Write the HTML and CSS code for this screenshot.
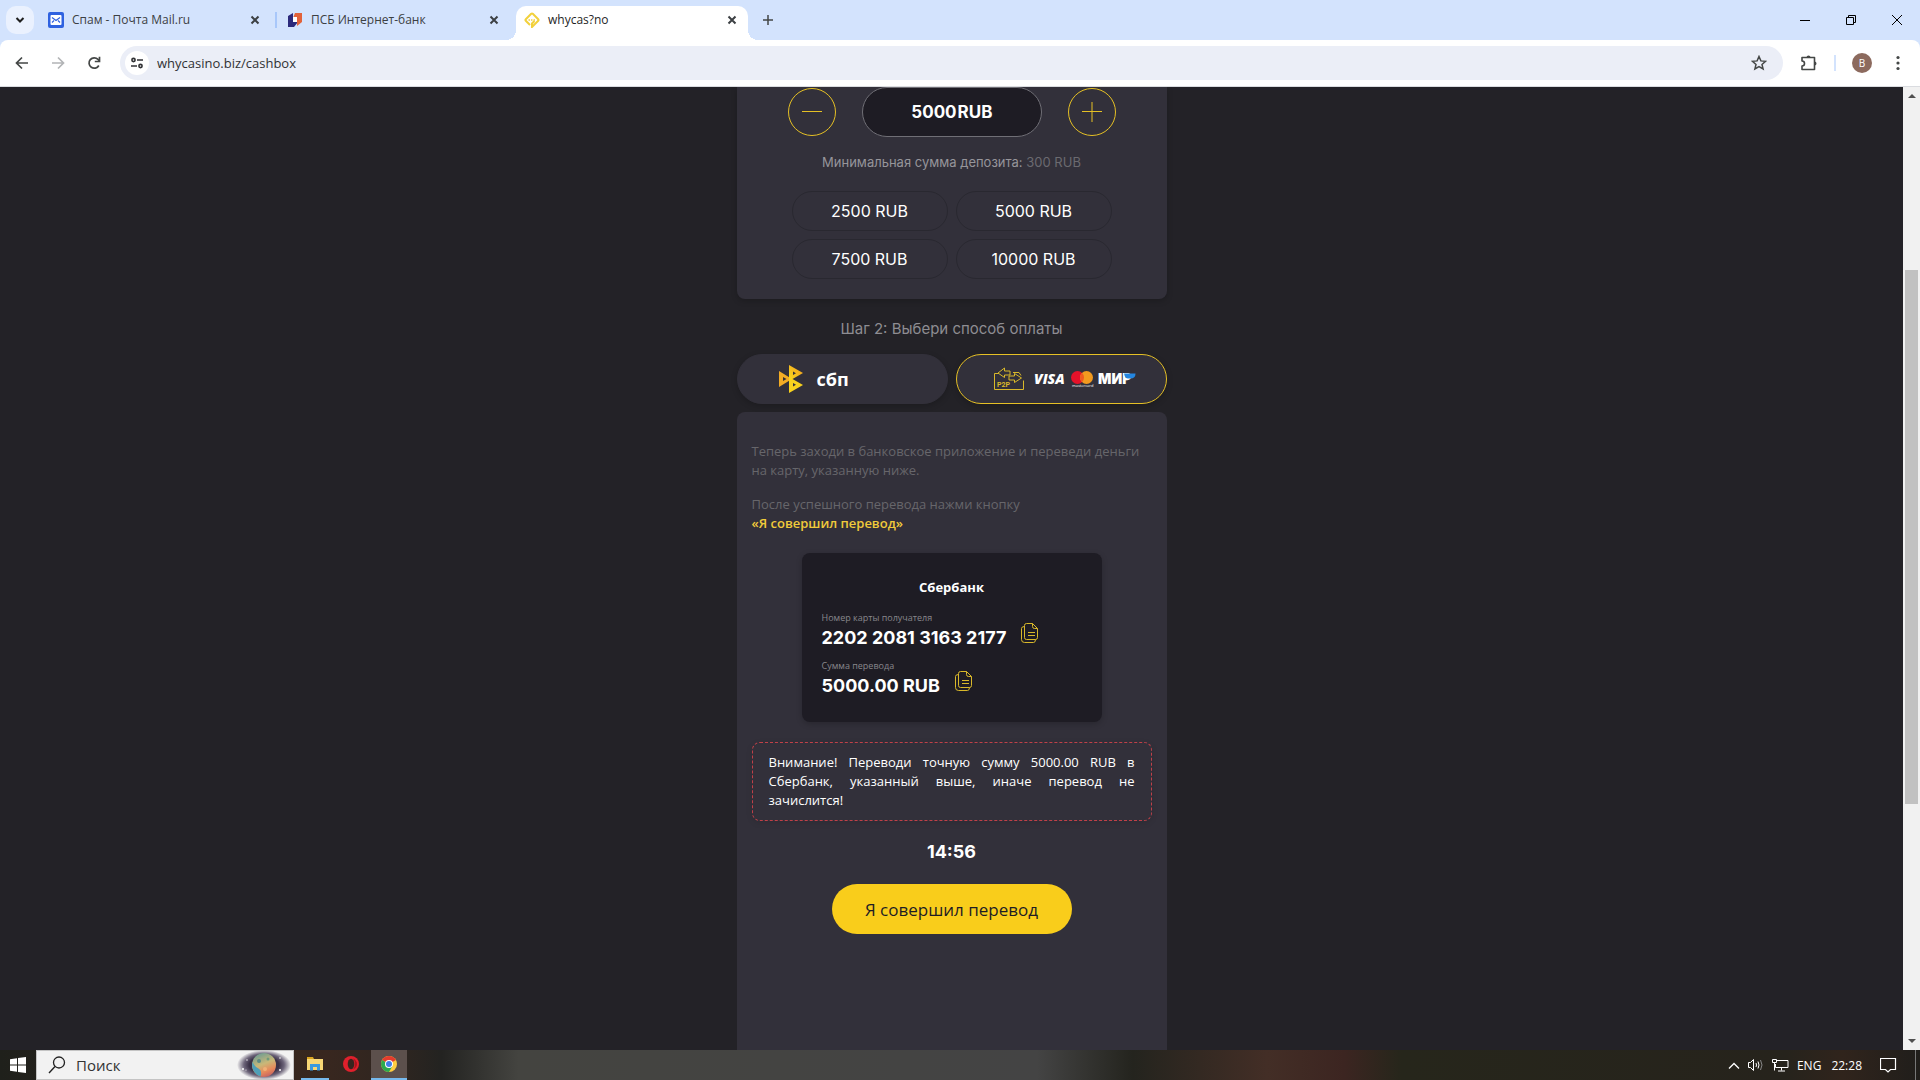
FILE: index.html
```html
<!DOCTYPE html>
<html lang="ru">
<head>
  <meta charset="UTF-8" />
  <meta name="viewport" content="width=device-width, initial-scale=1.0" />
  <title>whycas?no</title>
  <link rel="stylesheet" href="styles.css">
</head>
<body>
  <header class="browser">
    <div class="tab-strip">
      <button class="tab-search" aria-label="Поиск вкладок">
        <svg width="10" height="8" viewBox="0 0 10 8"><path d="M1.5 2l3.5 3.5L8.5 2" fill="none" stroke="#1f1f1f" stroke-width="2"/></svg>
      </button>
      <div class="tab">
        <svg width="16" height="16" viewBox="0 0 16 16">
          <rect width="16" height="16" rx="2" fill="#2f62e0"/>
          <rect x="2.500" y="3" width="11" height="10" rx="1" fill="#fff"/>
          <path d="M4 5.500l4 3 4-3M4 10.500l2-2M12 10.500l-2-2" fill="none" stroke="#2f62e0" stroke-width="1.200"/>
        </svg>
        <span class="tab-title">Спам - Почта Mail.ru</span>
        <button class="tab-close" aria-label="Закрыть"><svg width="10" height="10" viewBox="0 0 10 10"><path d="M1.500 1.500l7 7M8.500 1.500l-7 7"/></svg></button>
      </div>
      <span class="tab-divider"></span>
      <div class="tab">
        <svg width="16" height="16" viewBox="0 0 16 16">
          <path d="M1 4l5-3v9h5l-4 5H1z" fill="#2c2a7c"/>
          <path d="M8 1h7v9l-5 4V6H6z" fill="#e2623a"/>
          <path d="M6 5h4v5H6z" fill="#fff"/>
        </svg>
        <span class="tab-title">ПСБ Интернет-банк</span>
        <button class="tab-close" aria-label="Закрыть"><svg width="10" height="10" viewBox="0 0 10 10"><path d="M1.500 1.500l7 7M8.500 1.500l-7 7"/></svg></button>
      </div>
      <div class="tab active">
        <svg width="16" height="16" viewBox="0 0 16 16">
          <path d="M6 13L1.800 8.800a1.200 1.200 0 0 1 0-1.600L7.200 1.800a1.200 1.200 0 0 1 1.600 0L14.200 7.200a1.200 1.200 0 0 1 0 1.600L8 15v-3.500l2.500-2.500" fill="none" stroke="#f2d13c" stroke-width="2"/>
          <path d="M4.500 8h7" stroke="#f2d13c" stroke-width="1.500" stroke-dasharray="1.500 1"/>
        </svg>
        <span class="tab-title">whycas?no</span>
        <button class="tab-close" aria-label="Закрыть"><svg width="10" height="10" viewBox="0 0 10 10"><path d="M1.500 1.500l7 7M8.500 1.500l-7 7"/></svg></button>
      </div>
      <button class="new-tab" aria-label="Новая вкладка">
        <svg width="12" height="12" viewBox="0 0 12 12"><path d="M6 1v10M1 6h10" stroke="#444746" stroke-width="1.500"/></svg>
      </button>
      <div class="window-controls">
        <button aria-label="Свернуть"><svg width="10" height="10" viewBox="0 0 10 10"><path d="M0 5.500h10"/></svg></button>
        <button aria-label="Развернуть"><svg width="10" height="10" viewBox="0 0 10 10"><path d="M.5 2.500h7v7h-7zM2.500 2.500v-2h7v7h-2"/></svg></button>
        <button aria-label="Закрыть окно"><svg width="10" height="10" viewBox="0 0 10 10"><path d="M0 0l10 10M10 0L0 10"/></svg></button>
      </div>
    </div>
    <div class="toolbar">
      <nav class="nav-buttons">
        <button aria-label="Назад"><svg width="14" height="14" viewBox="0 0 14 14"><path d="M13 7H2M7 1.500L1.500 7 7 12.500" fill="none" stroke="#444746" stroke-width="1.700"/></svg></button>
        <button aria-label="Вперёд"><svg width="14" height="14" viewBox="0 0 14 14"><path d="M1 7h11M7 1.500L12.500 7 7 12.500" fill="none" stroke="#b2b4b6" stroke-width="1.700"/></svg></button>
        <button aria-label="Обновить"><svg width="14" height="14" viewBox="0 0 14 14"><path d="M11.800 9.500A5.200 5.200 0 1 1 11 3.400l1.200 1.400" fill="none" stroke="#444746" stroke-width="1.700"/><path d="M12.500.8v4.700H7.800" fill="none" stroke="#444746" stroke-width="1.700"/></svg></button>
      </nav>
      <div class="omnibox">
        <button class="site-info" aria-label="Сведения о сайте">
          <svg width="12" height="12" viewBox="0 0 12 12" fill="none" stroke="#303134" stroke-width="1.600"><circle cx="2.500" cy="3" r="1.600"/><path d="M6 3h6M0 9h6"/><circle cx="9.500" cy="9" r="1.600"/></svg>
        </button>
        <input class="url" type="text" value="whycasino.biz/cashbox" aria-label="Адресная строка">
        <button class="star" aria-label="Добавить в закладки">
          <svg width="16" height="16" viewBox="0 0 16 16"><path d="M8 1.500l1.900 4.400 4.700.4-3.600 3.100 1.100 4.600L8 11.600 3.900 14 5 9.400 1.400 6.300l4.700-.4z" fill="none" stroke="#444746" stroke-width="1.500"/></svg>
        </button>
      </div>
      <div class="toolbar-right">
        <button aria-label="Расширения">
          <svg width="18" height="18" viewBox="0 0 18 18"><path d="M2 3.500h12.500v12H2V12a2.200 2.200 0 0 0 0-5z" fill="none" stroke="#444746" stroke-width="1.600" stroke-linejoin="round"/><path d="M6.500 3.500a2 2 0 0 1 4 0zM14.500 7.500a2 2 0 0 1 0 4z" fill="#444746"/></svg>
        </button>
        <span class="toolbar-divider"></span>
        <button class="avatar">В</button>
        <button class="menu-btn" aria-label="Меню"><svg width="4" height="16" viewBox="0 0 4 16" fill="#444746"><circle cx="2" cy="2.500" r="1.600"/><circle cx="2" cy="8" r="1.600"/><circle cx="2" cy="13.500" r="1.600"/></svg></button>
      </div>
    </div>
  </header>

  <div class="viewport">
    <main class="cashbox">
      <section class="panel amount-panel">
        <div class="stepper">
          <button class="round-btn" aria-label="Уменьшить"><svg width="20" height="20" viewBox="0 0 20 20"><path d="M0 9.500h20"/></svg></button>
          <label class="amount"><input type="text" value="5000" aria-label="Сумма"><span>RUB</span></label>
          <button class="round-btn" aria-label="Увеличить"><svg width="20" height="20" viewBox="0 0 20 20"><path d="M0 9.500h20M10 0v20"/></svg></button>
        </div>
        <p class="min-sum">Минимальная сумма депозита: <span>300 RUB</span></p>
        <div class="presets">
          <button>2500 RUB</button>
          <button>5000 RUB</button>
          <button>7500 RUB</button>
          <button>10000 RUB</button>
        </div>
      </section>

      <h2 class="step-title">Шаг 2: Выбери способ оплаты</h2>

      <div class="methods">
        <button class="method sbp">
          <svg width="24" height="28" viewBox="0 0 24 28">
            <defs><linearGradient id="gold" x1="0" y1="1" x2="1" y2="0"><stop offset="0" stop-color="#f7dc1e"/><stop offset="1" stop-color="#f39a1f"/></linearGradient></defs>
            <path d="M0 6l13 8L0 22z" fill="#f3ac24"/>
            <path d="M10 0l14 8-14 8z" fill="url(#gold)"/>
            <path d="M10 12l14 8-14 8z" fill="#f8d21e"/>
            <path d="M4 12l3.500 2L4 16zM14 6.500l3 1.700-3 1.800zM14 18l3 1.800-3 1.700z" fill="#32303a"/>
          </svg>
          <span>сбп</span>
        </button>
        <button class="method selected" aria-label="P2P">
          <svg width="30" height="24" viewBox="0 0 30 24" fill="none" stroke="#d9b82a">
            <path d="M5 6.500H.5v16h29v-9M19 5.500h6l2 3"/>
            <path d="M10.500 1L4 6l6.500 4.500V8H16V4h-5.500zM20.500 6.500l7 4.500-7 4.500V13H15V9h5.500z" fill="#32303a"/>
            <text x="3" y="20" class="p2p-text">P2P</text>
          </svg>
          <svg width="102" height="20" viewBox="0 0 102 20">
            <text x="0" y="15" class="visa-text">VISA</text>
            <circle cx="43.500" cy="8.500" r="6.500" fill="#e5122a"/>
            <circle cx="52.500" cy="8.500" r="6.500" fill="#f29a1f"/>
            <path d="M48 3.800a6.500 6.500 0 0 1 0 9.400 6.500 6.500 0 0 1 0-9.400z" fill="#ef5a20"/>
            <text x="38" y="18" class="mc-text">mastercard</text>
            <text x="64" y="15" class="mir-text">МИР</text>
            <path d="M90 4.500h11.500q0 5-5 5H94q-3 0-4-5z" fill="#2486e0"/>
          </svg>
        </button>
      </div>

      <section class="panel transfer-panel">
        <p class="hint">Теперь заходи в банковское приложение и переведи деньги на карту, указанную ниже.</p>
        <p class="hint">После успешного перевода нажми кнопку <strong>«Я совершил перевод»</strong></p>

        <div class="card">
          <h3>Сбербанк</h3>
          <div class="field">
            <div>
              <div class="field-label">Номер карты получателя</div>
              <div class="field-value">2202 2081 3163 2177</div>
            </div>
            <button class="copy-btn" aria-label="Скопировать номер">
              <svg width="18" height="20" viewBox="0 0 18 20"><path d="M5.500.5h6l5 5v9q0 2-2 2h-9q-2 0-2-2v-12q0-2 2-2zM11.500.5v3q0 2 2 2h3M3.500 3.500q-3 0-3 2v11q0 3 3 3h9q2 0 2-3M7 9.500h7M7 12.500h7"/></svg>
            </button>
          </div>
          <div class="field">
            <div>
              <div class="field-label">Сумма перевода</div>
              <div class="field-value">5000.00 RUB</div>
            </div>
            <button class="copy-btn" aria-label="Скопировать сумму">
              <svg width="18" height="20" viewBox="0 0 18 20"><path d="M5.500.5h6l5 5v9q0 2-2 2h-9q-2 0-2-2v-12q0-2 2-2zM11.500.5v3q0 2 2 2h3M3.500 3.500q-3 0-3 2v11q0 3 3 3h9q2 0 2-3M7 9.500h7M7 12.500h7"/></svg>
            </button>
          </div>
        </div>

        <p class="warning">Внимание! Переводи точную сумму 5000.00 RUB в Сбербанк, указанный выше, иначе перевод не зачислится!</p>
        <div class="timer">14:56</div>
        <button class="done-btn">Я совершил перевод</button>
      </section>
    </main>

    <div class="scrollbar">
      <span class="arrow-up"></span>
      <div class="track"><div class="thumb"></div></div>
      <span class="arrow-down"></span>
    </div>
  </div>

  <footer class="taskbar">
    <button class="start-btn" aria-label="Пуск">
      <svg width="16" height="16" viewBox="0 0 16 16" fill="#fff"><path d="M0 2.300L7 1.300v6.200H0zM8 1.100L16 0v7.500H8zM0 8.500h7v6.200l-7-1zM8 8.500h8V16l-8-1.100z"/></svg>
    </button>
    <div class="search-box">
      <svg width="18" height="18" viewBox="0 0 18 18"><circle cx="11" cy="6.500" r="5.500" fill="none" stroke="#222" stroke-width="1.300"/><path d="M7 10.500L1 17" stroke="#222" stroke-width="1.400"/></svg>
      <input type="text" placeholder="Поиск" aria-label="Поиск">
      <svg width="54" height="28" viewBox="0 0 54 28">
        <defs>
          <radialGradient id="space"><stop offset="0.550" stop-color="#3a3147"/><stop offset="0.750" stop-color="#6d657a"/><stop offset="1" stop-color="#f2f2f2"/></radialGradient>
          <linearGradient id="planet" x1="0.300" y1="0" x2="0.700" y2="1"><stop offset="0" stop-color="#6d9c93"/><stop offset="0.450" stop-color="#c9b878"/><stop offset="0.750" stop-color="#e8895a"/><stop offset="1" stop-color="#c25f62"/></linearGradient>
        </defs>
        <ellipse cx="27" cy="14" rx="27" ry="15" fill="url(#space)"/>
        <circle cx="27" cy="14" r="12" fill="url(#planet)"/>
        <path d="M15.500 11a12 12 0 0 0 8 14.500q2-6-2-8t-6-6.500z" fill="#4f9fb8"/>
        <circle cx="22" cy="10" r="2" fill="#5c8b84"/><circle cx="31" cy="8" r="1.500" fill="#6f9b7c"/><circle cx="28" cy="18" r="2" fill="#f0b076"/>
        <g fill="#fff"><circle cx="6" cy="18" r="1"/><circle cx="10" cy="9" r="0.700"/><circle cx="43" cy="7" r="0.800"/><circle cx="43" cy="19" r="1"/><circle cx="9" cy="19" r="0.600"/></g>
      </svg>
    </div>
    <div class="apps">
      <button class="app open" aria-label="Проводник">
        <svg width="16" height="16" viewBox="0 0 16 16"><path d="M0 1h6l1 2H0z" fill="#d9a520"/><path d="M0 3h16v11H0z" fill="#f8d775"/><path d="M3 8h10v6.500h-3V11H6v3.500H3z" fill="#3b9ade"/></svg>
      </button>
      <button class="app" aria-label="Opera">
        <svg width="16" height="16" viewBox="0 0 16 16"><circle cx="8" cy="8" r="8" fill="#e0202c"/><ellipse cx="8" cy="8" rx="3.300" ry="5.300" fill="#38251f"/><path d="M10 2.500q4 2 4 5.500t-4 5.500q2-2 2-5.500t-2-5.500z" fill="#a8121c"/></svg>
      </button>
      <button class="app open current" aria-label="Chrome">
        <svg width="16" height="16" viewBox="0 0 16 16"><circle cx="8" cy="8" r="8" fill="#ffcd40"/><path d="M8 8L1.100 4a8 8 0 0 1 13.800 0z" fill="#e33b2e"/><path d="M8 8L1.100 4A8 8 0 0 0 8 16l3.500-6z" fill="#2da94f"/><circle cx="8" cy="8" r="4" fill="#fff"/><circle cx="8" cy="8" r="3" fill="#3f7ee8"/></svg>
      </button>
    </div>
    <div class="tray">
      <svg width="12" height="7" viewBox="0 0 12 7"><path d="M1 6.500l5-5 5 5" fill="none" stroke="#fff" stroke-width="1.300"/></svg>
      <svg width="16" height="14" viewBox="0 0 16 14" fill="none" stroke="#fff"><path d="M.5 4.500h2l3-3v11l-3-3h-2z"/><path d="M8 5q1 2 0 4M10 3.500q2 3.500 0 7"/><path d="M12.500 2q3 5 0 10" stroke="#888"/></svg>
      <svg width="17" height="14" viewBox="0 0 17 14" fill="none" stroke="#fff"><path d="M5 2.500h11v7H3.500V6M9.500 9.500v3M6 13h7M.5 1.500h4v3h-4zM2.500 4.500v8"/></svg>
      <span class="lang">ENG</span>
      <span class="clock">22:28</span>
      <svg width="17" height="17" viewBox="0 0 17 17"><path d="M.5 1.500h15v11h-5l-2.500 2.500-2.500-2.500h-5z" fill="none" stroke="#fff" stroke-width="1.200"/></svg>
      <span class="desktop-edge"></span>
    </div>
  </footer>
</body>
</html>
```

FILE: styles.css
```css
* { box-sizing: border-box; margin: 0; padding: 0; }

body {
  font-family: 'Open Sans', 'Noto Sans', sans-serif;
  display: flex;
  flex-direction: column;
  height: 100vh;
  overflow: hidden;
  background-color: #232227;
  color: #fff;
}

button, input {
  font-family: inherit;
  color: inherit;
  border: none;
  background: none;
  outline: none;
}

button { cursor: pointer; }
svg { display: block; flex-shrink: 0; }

/* browser */
.browser {
  background-color: #d3e3fd;
  color: #3c4043;
  flex-shrink: 0;
}

.tab-strip {
  display: flex;
  align-items: center;
  height: 40px;
  padding-left: 6px;
}

.tab-search {
  display: flex;
  align-items: center;
  justify-content: center;
  width: 28px;
  height: 28px;
  margin-right: 6px;
  border-radius: 10px;
  background-color: #eaf1fe;
}

.tab {
  display: flex;
  align-items: center;
  gap: 8px;
  width: 235px;
  height: 34px;
  padding: 0 12px 0 8px;
}

.tab-title {
  flex: 1;
  font-size: 12px;
  line-height: 16px;
  white-space: nowrap;
}

.tab-close {
  display: flex;
  padding: 3px;
}

.tab-close svg { stroke: #3c4043; stroke-width: 2; }

.tab-divider {
  width: 2px;
  height: 16px;
  margin-right: 2px;
  background-color: #a8c7fa;
}

.tab.active {
  position: relative;
  align-self: flex-end;
  width: 232px;
  margin-left: 2px;
  padding: 0 8px 6px;
  background-color: #fff;
  border-radius: 10px 10px 0 0;
  color: #1f1f1f;
}

.tab.active::before,
.tab.active::after {
  content: "";
  position: absolute;
  bottom: 0;
  width: 10px;
  height: 10px;
}

.tab.active::before { left: -10px; background: radial-gradient(circle at 0 0, transparent 10px, #fff 10px); }
.tab.active::after { right: -10px; background: radial-gradient(circle at 100% 0, transparent 10px, #fff 10px); }

.new-tab { padding: 14px; }

.window-controls {
  display: flex;
  margin-left: auto;
}

.window-controls button {
  display: flex;
  justify-content: center;
  width: 46px;
  padding: 15px 0;
}

.window-controls svg { fill: none; stroke: #000; }

.toolbar {
  display: flex;
  align-items: center;
  height: 47px;
  padding: 0 12px 0 4px;
  background-color: #fff;
  border-bottom: 1px solid #dadce0;
  border-radius: 8px 8px 0 0;
}

.nav-buttons { display: flex; }

.nav-buttons button {
  display: flex;
  justify-content: center;
  width: 36px;
}

.omnibox {
  flex: 1;
  display: flex;
  align-items: center;
  gap: 8px;
  height: 34px;
  margin: 0 17px 0 8px;
  padding: 0 16px 0 5px;
  border-radius: 17px;
  background-color: #ebeef7;
}

.site-info {
  display: flex;
  align-items: center;
  justify-content: center;
  width: 24px;
  height: 24px;
  border-radius: 50%;
  background-color: #fff;
}

.url {
  flex: 1;
  font-size: 13px;
  color: #303134;
}

.toolbar-right {
  display: flex;
  align-items: center;
  gap: 16px;
}

.toolbar-divider {
  width: 2px;
  height: 16px;
  background-color: #d3e3fd;
}

.avatar {
  width: 20px;
  height: 20px;
  border-radius: 50%;
  background-color: #8c6a5e;
  color: #fff;
  font-size: 10px;
}

.menu-btn { padding: 0 8px; }

/* cashbox page */
.viewport {
  flex: 1;
  min-height: 0;
  display: flex;
}

.cashbox {
  flex: 1;
  display: flex;
  flex-direction: column;
  align-items: center;
  overflow: hidden;
}

.panel {
  width: 100%;
  max-width: 430px;
  background-color: #32303a;
}

.amount-panel {
  flex-shrink: 0;
  padding-bottom: 20px;
  border-radius: 0 0 8px 8px;
  box-shadow: 0 2px 6px rgba(0, 0, 0, 0.2);
}

.stepper {
  display: flex;
  align-items: center;
  justify-content: center;
  gap: 26px;
}

.round-btn {
  display: flex;
  align-items: center;
  justify-content: center;
  width: 48px;
  height: 48px;
  border: 1px solid #e5c025;
  border-radius: 50%;
}

.round-btn svg { stroke: #e5c025; }

.amount {
  display: flex;
  align-items: center;
  justify-content: center;
  gap: 1px;
  width: 180px;
  height: 50px;
  border: 1px solid #706f76;
  border-radius: 25px;
  background-color: #1e1c24;
  font-family: Inter, sans-serif;
  font-size: 17px;
  font-weight: 700;
}

.amount input {
  width: 46px;
  font-size: 17px;
  font-weight: 700;
  text-align: right;
}

.min-sum {
  margin: 15px 0 19px;
  font-family: Inter, sans-serif;
  font-size: 13px;
  line-height: 20px;
  text-align: center;
  color: #96959a;
}

.min-sum span { color: #6b6a70; }

.presets {
  display: grid;
  grid-template-columns: 1fr 1fr;
  gap: 8px;
  padding: 0 55px;
}

.presets button {
  height: 40px;
  border: 1px solid #292830;
  border-radius: 20px;
  font-family: Inter, sans-serif;
  font-size: 16px;
}

.step-title {
  margin: 20px 0 15px;
  font-family: Inter, sans-serif;
  font-size: 15px;
  line-height: 20px;
  font-weight: 400;
  color: #8e8d92;
}

.methods {
  display: grid;
  grid-template-columns: 1fr 1fr;
  gap: 8px;
  width: 100%;
  max-width: 430px;
  margin-bottom: 8px;
}

.method {
  display: flex;
  align-items: center;
  height: 50px;
  border: 1px solid #32303a;
  border-radius: 25px;
  background-color: #32303a;
  box-shadow: 0 2px 6px rgba(0, 0, 0, 0.2);
}

.sbp {
  gap: 14px;
  padding-left: 41px;
  font-size: 18px;
  font-weight: 700;
}

.method.selected {
  justify-content: center;
  gap: 10px;
  padding-left: 8px;
  border-color: #e5c025;
}

.p2p-text {
  font-family: Roboto, sans-serif;
  font-size: 7px;
  font-weight: 700;
  fill: #d9b82a;
  stroke: none;
}

.visa-text {
  font-size: 14px;
  font-weight: 800;
  font-style: italic;
  fill: #fff;
}

.mc-text { font-size: 4px; fill: #fff; }

.mir-text {
  font-family: Inter, sans-serif;
  font-size: 14px;
  font-weight: 900;
  fill: #fff;
}

.transfer-panel {
  flex: 1 0 auto;
  display: flex;
  flex-direction: column;
  align-items: center;
  padding: 30px 15px;
  border-radius: 8px 8px 0 0;
}

.hint {
  align-self: stretch;
  margin-bottom: 15px;
  font-size: 13px;
  line-height: 19px;
  color: #67666b;
}

.hint strong {
  display: block;
  font-weight: 600;
  color: #f0ca3a;
}

.card {
  width: 300px;
  margin: 5px 0 20px;
  padding: 25px 20px 24px;
  border-radius: 8px;
  background-color: #1e1c24;
  box-shadow: 0 2px 6px rgba(0, 0, 0, 0.2);
}

.card h3 {
  margin-bottom: 13px;
  font-size: 13px;
  line-height: 19px;
  text-align: center;
}

.field {
  display: flex;
  align-items: center;
  gap: 15px;
  height: 40px;
}

.field + .field { margin-top: 8px; }

.field-label {
  font-size: 9px;
  line-height: 16px;
  color: #88878c;
}

.field-value {
  font-family: Inter, sans-serif;
  font-size: 18px;
  line-height: 24px;
  font-weight: 700;
}

.copy-btn { padding-top: 6px; }
.copy-btn svg { fill: none; stroke: #d9b82a; }

.warning {
  padding: 10px 16px;
  border: 1px dashed #c04048;
  border-radius: 8px;
  font-size: 13px;
  line-height: 19px;
  text-align: justify;
  box-shadow: 0 2px 6px rgba(0, 0, 0, 0.1);
}

.timer {
  margin: 19px 0 20px;
  font-family: Inter, sans-serif;
  font-size: 18px;
  line-height: 24px;
  font-weight: 700;
}

.done-btn {
  width: 240px;
  height: 50px;
  border-radius: 25px;
  background-color: #f9cd1b;
  color: #1e1c24;
  font-size: 17px;
}

.scrollbar {
  display: flex;
  flex-direction: column;
  align-items: center;
  justify-content: space-between;
  width: 17px;
  padding: 7px 0;
  background-color: #f1f1f1;
}

.arrow-up, .arrow-down {
  border: 4px solid transparent;
}

.arrow-up { border-top: none; border-bottom-color: #505050; }
.arrow-down { border-bottom: none; border-top-color: #505050; }

.track {
  flex: 1;
  display: flex;
  flex-direction: column;
  width: 100%;
  padding: 0 2px;
}

.track::before { content: ""; flex: 172; }
.track::after { content: ""; flex: 235; }

.thumb {
  flex: 534;
  background-color: #c1c1c1;
}

/* taskbar */
.taskbar {
  display: flex;
  height: 30px;
  flex-shrink: 0;
  background: linear-gradient(90deg, #1f201b 0, #38271f 17%, #2d2520 21%, #232321 23%, #444440 27%, #444444 54%, #24241e 59%, #432e26 66%, #3c2521 70%, #26261b 73%, #26231c 93%, #30241c 96%, #201e1b 100%);
}

.start-btn {
  display: flex;
  align-items: center;
  justify-content: center;
  width: 36px;
}

.search-box {
  display: flex;
  align-items: center;
  gap: 10px;
  width: 258px;
  padding: 0 2px 0 11px;
  border: 1px solid #c4c4c4;
  background-color: #f2f2f2;
}

.search-box input {
  flex: 1;
  min-width: 0;
  font-size: 15px;
  color: #333;
}

.search-box input::placeholder { color: #333; opacity: 1; }

.apps {
  display: flex;
  gap: 8px;
  padding-left: 7px;
}

.app {
  display: flex;
  align-items: center;
  justify-content: center;
  width: 28px;
  border-bottom: 2px solid transparent;
}

.app.open { border-bottom-color: #76b9ed; }

.app.current {
  width: 36px;
  margin-left: -2px;
  background-color: #5c504c;
}

.tray {
  display: flex;
  align-items: center;
  margin-left: auto;
  gap: 8px;
  font-size: 12px;
}

.lang { margin-right: 2px; }
.clock { margin-right: 10px; }

.desktop-edge {
  width: 5px;
  height: 100%;
  margin-left: 10px;
  border-left: 1px solid #777;
}
```
